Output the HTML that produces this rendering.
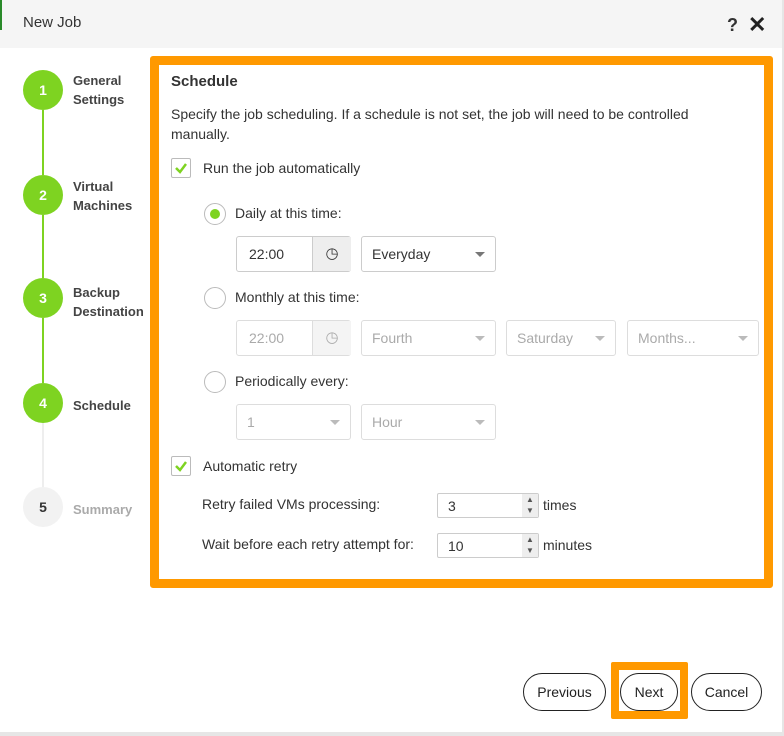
<!DOCTYPE html>
<html><head><style>
*{box-sizing:border-box;margin:0;padding:0}
body{width:784px;height:736px;background:#fff;font-family:"Liberation Sans",sans-serif;color:#333;font-size:14px;position:relative;overflow:hidden}
.a{position:absolute}
.hdr{left:0;top:0;width:784px;height:48px;background:#f5f5f5}
.circ{width:40px;height:40px;border-radius:50%;background:#7ed321;color:#fff;font-weight:bold;text-align:center;line-height:40px;font-size:14px;left:23px}
.st{left:73px;font-size:13px;color:#444;font-weight:bold;line-height:19px}
.vl{left:42px;width:2px;background:#7ed321}
.box{border:1px solid #ccc;border-radius:3px;height:36px;background:#fff}
.dis{color:#aaa;border-color:#ddd}
.tri{position:absolute;right:10px;top:15px;width:0;height:0;border-left:5px solid transparent;border-right:5px solid transparent;border-top:5px solid #777}
.dis .tri{border-top-color:#bbb}
.txt{position:absolute;left:10px;top:9px}
.radio{width:22px;height:22px;border-radius:50%;border:1px solid #bbb;background:#fff}
.chk{width:20px;height:20px;border:1px solid #bbb;border-radius:2px;background:#fff}
.btn{height:38px;border:1px solid #222;border-radius:19px;text-align:center;line-height:36px;font-size:14px;color:#222;background:#fff}
</style></head><body>
<div class="a hdr"></div>
<div class="a" style="left:0;top:0;width:2px;height:30px;background:#2a8a2a"></div>
<div class="a" style="left:23px;top:14px;font-size:15px;color:#333">New Job</div>
<div class="a" style="left:727px;top:15px;font-size:18px;font-weight:bold;color:#333">?</div>
<div class="a" style="left:748px;top:12px;font-size:22px;font-weight:bold;color:#222">✕</div>

<div class="a vl" style="top:110px;height:65px"></div>
<div class="a vl" style="top:215px;height:63px"></div>
<div class="a vl" style="top:318px;height:65px"></div>
<div class="a vl" style="top:423px;height:64px;background:#eee"></div>
<div class="a circ" style="top:70px">1</div>
<div class="a circ" style="top:175px">2</div>
<div class="a circ" style="top:278px">3</div>
<div class="a circ" style="top:383px">4</div>
<div class="a circ" style="top:487px;background:#f2f2f2;color:#333">5</div>
<div class="a st" style="top:71px">General<br>Settings</div>
<div class="a st" style="top:177px">Virtual<br>Machines</div>
<div class="a st" style="top:283px">Backup<br>Destination</div>
<div class="a st" style="top:396px">Schedule</div>
<div class="a st" style="top:500px;color:#aaa">Summary</div>

<div class="a" style="left:150px;top:56px;width:623px;height:532px;border:9px solid #ff9900;border-radius:3px"></div>
<div class="a" style="left:171px;top:73px;font-size:15px;font-weight:bold">Schedule</div>
<div class="a" style="left:171px;top:104px;line-height:20px;width:580px">Specify the job scheduling. If a schedule is not set, the job will need to be controlled manually.</div>
<div class="a chk" style="left:171px;top:158px"><svg width="18" height="18" style="position:absolute;left:0;top:0"><path d="M4 9 L8 13 L14 5" stroke="#7ed321" stroke-width="2.5" fill="none"/></svg></div>
<div class="a" style="left:203px;top:160px">Run the job automatically</div>

<div class="a radio" style="left:204px;top:203px"><div style="position:absolute;left:5px;top:5px;width:10px;height:10px;border-radius:50%;background:#7ed321"></div></div>
<div class="a" style="left:235px;top:205px">Daily at this time:</div>
<div class="a box" style="left:236px;top:236px;width:115px"><span class="txt" style="left:12px">22:00</span><div style="position:absolute;left:75px;top:0;width:39px;height:34px;background:#eee;border-left:1px solid #ccc;text-align:center;line-height:34px;font-size:15px">◷</div></div>
<div class="a box" style="left:361px;top:236px;width:135px"><span class="txt">Everyday</span><div class="tri"></div></div>

<div class="a radio" style="left:204px;top:287px"></div>
<div class="a" style="left:235px;top:289px">Monthly at this time:</div>
<div class="a box dis" style="left:236px;top:320px;width:115px"><span class="txt" style="left:12px">22:00</span><div style="position:absolute;left:75px;top:0;width:39px;height:34px;background:#f4f4f4;border-left:1px solid #ddd;text-align:center;line-height:34px;color:#aaa;font-size:15px">◷</div></div>
<div class="a box dis" style="left:361px;top:320px;width:135px"><span class="txt">Fourth</span><div class="tri"></div></div>
<div class="a box dis" style="left:506px;top:320px;width:110px"><span class="txt">Saturday</span><div class="tri"></div></div>
<div class="a box dis" style="left:627px;top:320px;width:132px"><span class="txt">Months...</span><div class="tri"></div></div>

<div class="a radio" style="left:204px;top:371px"></div>
<div class="a" style="left:235px;top:373px">Periodically every:</div>
<div class="a box dis" style="left:236px;top:404px;width:115px"><span class="txt">1</span><div class="tri"></div></div>
<div class="a box dis" style="left:361px;top:404px;width:135px"><span class="txt">Hour</span><div class="tri"></div></div>

<div class="a chk" style="left:171px;top:456px"><svg width="18" height="18" style="position:absolute;left:0;top:0"><path d="M4 9 L8 13 L14 5" stroke="#7ed321" stroke-width="2.5" fill="none"/></svg></div>
<div class="a" style="left:203px;top:458px">Automatic retry</div>
<div class="a" style="left:202px;top:496px">Retry failed VMs processing:</div>
<div class="a box" style="left:437px;top:493px;width:102px;height:25px;border-radius:2px"><span style="position:absolute;left:10px;top:4px">3</span><div style="position:absolute;right:0;top:0;width:16px;height:23px;background:#eee;font-size:8px;line-height:11px;text-align:center;color:#555">▲<br>▼</div></div>
<div class="a" style="left:543px;top:497px">times</div>
<div class="a" style="left:202px;top:536px">Wait before each retry attempt for:</div>
<div class="a box" style="left:437px;top:533px;width:102px;height:25px;border-radius:2px"><span style="position:absolute;left:10px;top:4px">10</span><div style="position:absolute;right:0;top:0;width:16px;height:23px;background:#eee;font-size:8px;line-height:11px;text-align:center;color:#555">▲<br>▼</div></div>
<div class="a" style="left:543px;top:537px">minutes</div>

<div class="a btn" style="left:523px;top:673px;width:83px">Previous</div>
<div class="a" style="left:611px;top:662px;width:77px;height:57px;border:8px solid #ff9900;border-radius:2px"></div>
<div class="a btn" style="left:620px;top:673px;width:58px">Next</div>
<div class="a btn" style="left:691px;top:673px;width:71px">Cancel</div>
<div class="a" style="left:0;top:732px;width:784px;height:4px;background:#e6e6e6"></div>
<div class="a" style="left:782px;top:0;width:2px;height:736px;background:#e6e6e6"></div>
</body></html>
